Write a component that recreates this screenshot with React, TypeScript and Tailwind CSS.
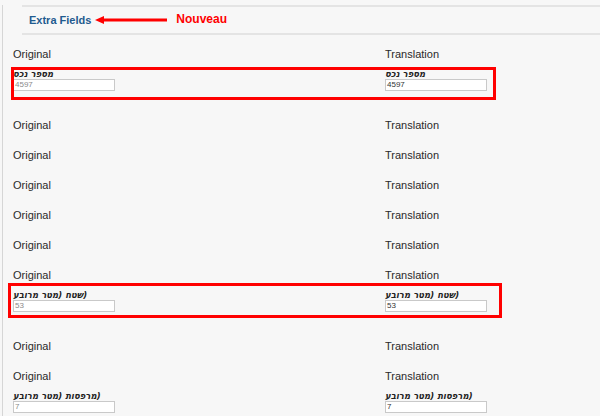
const FONT = { fontFamily: '"Liberation Sans", Arial, "DejaVu Sans", sans-serif' };
const LABEL_FONT = { fontFamily: '"DejaVu Sans Condensed", "DejaVu Sans", sans-serif' };

type Field = {
  label: string;
  tail?: string;
  original: string;
  translation: string;
  box?: "first" | "second";
};

type Row = { field?: Field };

const rows: Row[] = [
  { field: { label: "מספר נכס", original: "4597", translation: "4597", box: "first" } },
  {},
  {},
  {},
  {},
  {},
  { field: { label: "שטח (מטר מרובע", tail: ")", original: "53", translation: "53", box: "second" } },
  {},
  { field: { label: "מרפסות (מטר מרובע", tail: ")", original: "7", translation: "7" } },
];

function FieldInput({ value, muted }: { value: string; muted?: boolean }) {
  return (
    <div
      className={
        "flex h-[12px] w-[102px] items-center border border-[#c9c9c9] bg-white pl-[1px] text-[8px] leading-none " +
        (muted ? "text-[#8a8a8a]" : "text-[#333]")
      }
    >
      {value}
    </div>
  );
}

function FieldCell({ field, value, muted }: { field: Field; value: string; muted?: boolean }) {
  // label keeps the old bidi look: the closing bracket trails on the right
  return (
    <div className="flex flex-col">
      <div
        style={LABEL_FONT}
        dir="ltr"
        className="h-[10px] text-[9.5px] font-bold italic leading-[10px] text-[#222]"
      >
        <bdi dir="rtl">{field.label}</bdi>
        {field.tail}
      </div>
      <FieldInput value={value} muted={muted} />
    </div>
  );
}

function FieldRow({ row }: { row: Row }) {
  const f = row.field;
  return (
    <div className="flex flex-col">
      <div className="grid h-[30px] grid-cols-[372px_1fr] items-center text-[11px] text-[#2a2a2a]">
        <span>Original</span>
        <span>Translation</span>
      </div>
      {f ? (
        <div className="relative grid h-[41px] grid-cols-[372px_1fr]">
          <FieldCell field={f} value={f.original} muted />
          <FieldCell field={f} value={f.translation} />
          {/* red annotation boxes drawn over the screenshot */}
          {f.box === "first" ? (
            <div className="pointer-events-none absolute left-[-2px] top-[-2px] h-[33px] w-[485px] border-[3px] border-[#ff0000]" />
          ) : null}
          {f.box === "second" ? (
            <div className="pointer-events-none absolute left-[-5px] top-[-7px] h-[35px] w-[494px] border-[3px] border-[#ff0000]" />
          ) : null}
        </div>
      ) : null}
    </div>
  );
}

function Arrow() {
  return (
    <svg width="72" height="10" viewBox="0 0 72 10" aria-hidden>
      <path d="M0 5 L9 1 L9 3.6 L72 3.6 L72 6.6 L9 6.6 L9 9 Z" fill="#ff0000" />
    </svg>
  );
}

export default function App() {
  return (
    <div style={FONT} className="h-[416px] w-[600px] overflow-hidden bg-[#f7f7f7]">
      <div className="ml-[2px] h-full border-l border-[#d6d6d6]">
        <div className="ml-[19px] mt-[5px] flex h-[30px] items-center border-y-2 border-[#e4e4e4] pl-[7px]">
          <span className="text-[11px] font-bold text-[#1f5b8f]">Extra Fields</span>
          <span className="ml-[4px] flex items-center">
            <Arrow />
          </span>
          <span className="ml-[9px] -mt-[3px] text-[12px] font-bold text-[#ff0000]">Nouveau</span>
        </div>
        <div className="mt-[4px] flex flex-col pl-[10px]">
          {rows.map((r, i) => (
            <FieldRow key={i} row={r} />
          ))}
        </div>
      </div>
    </div>
  );
}
